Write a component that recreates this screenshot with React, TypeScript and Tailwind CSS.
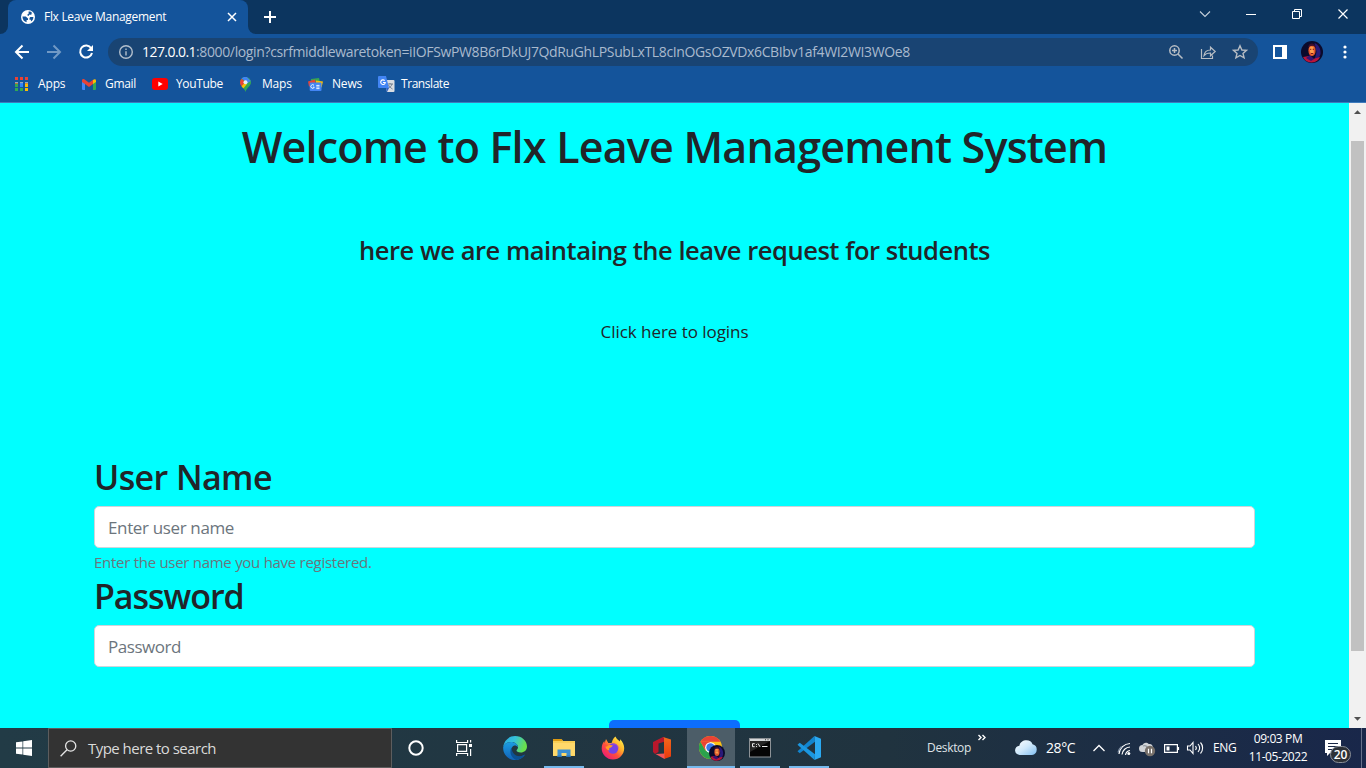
import React from "react";

function Globe() {
  return (
    <svg width="14" height="14" viewBox="0 0 14 14">
      <circle cx="7" cy="7" r="7" fill="#fff" />
      <path d="M1.500 6.600h3.300L7 8.600v1.300H5.600v2.400C3.200 11.700 1.500 9.600 1.500 7zM7.600 1.500h1.600c.900.400 1.600 1 2.200 1.800l-1 .300v1.200H8v1h-.900L6 5l1.600-1.200zM9.300 6.900h3.100c0 2-.900 3.600-2.500 4.600V9.700H8.500V8z" fill="#14549b" />
    </svg>
  );
}

function Face({ size }: { size: number }) {
  return (
    <svg width={size} height={size} viewBox="0 0 22 22" className="shrink-0">
      <circle cx="11" cy="11" r="11" fill="#0b0a2b" />
      <path d="M13.500 2c4.500 2 6.500 6 6 11-1 4-3 5-6 6l2-8z" fill="#2a1a7a" />
      <path d="M2 16l6-1 4 3 7-2c-1 3-4 5.200-8 5.500C6.500 21.800 3.500 19.500 2 16z" fill="#b8153c" />
      <path d="M5 17l4-3 4 4-3 2z" fill="#3a1170" />
      <ellipse cx="11" cy="9.500" rx="3.600" ry="5.600" fill="#e2542a" />
      <path d="M8.500 7c1-1.500 3-2 4-.5l.300 5L11 14l-2-3z" fill="#ff9d4a" />
      <path d="M9 8.300h1.300M11.700 8.300H13M10 12.500h2" stroke="#7a1c20" />
      <path d="M7 6.500c.5-3.500 3-4.500 5-3.800C14 3.300 15 5 14.700 7L13 4.800 9 5z" fill="#3b1030" />
    </svg>
  );
}

function TabStrip() {
  return (
    <div className="flex h-[34px] bg-[#0c355f] text-white">
      <div className="flex w-2 items-end bg-[#14549b]"><div className="h-full w-2 rounded-br-lg bg-[#0c355f]" /></div>
      <div className="flex w-60 items-center rounded-t-lg bg-[#14549b] pl-[13px] pr-[11px]">
        <Globe />
        <span className="ml-[9px] flex-1 whitespace-nowrap text-xs tracking-[-0.31px]">Flx Leave Management</span>
        <svg width="10" height="10" viewBox="0 0 10 10" stroke="#fff" strokeWidth="1.500"><path d="M1 1l8 8M9 1l-8 8" /></svg>
      </div>
      <div className="w-2 bg-[#14549b]"><div className="h-full w-2 rounded-bl-lg bg-[#0c355f]" /></div>
      <svg width="12" height="12" viewBox="0 0 12 12" className="ml-2 mt-[11px]" stroke="#fff" strokeWidth="2"><path d="M6 0v12M0 6h12" /></svg>
      <div className="flex-1" />
      <svg width="168" height="34" viewBox="1198 0 168 34" fill="none" stroke="#fff">
        <path d="M1200 11.500l5 5 5-5" stroke="#c5d0dc" strokeWidth="1.100" />
        <path d="M1246 14.500h10" />
        <path d="M1292.500 11.500h7v7h-7zM1294.500 11v-1.500h7v7h-2" />
        <path d="M1338.500 9.500l9 9M1347.500 9.500l-9 9" strokeWidth="1.200" />
      </svg>
    </div>
  );
}

function Toolbar() {
  return (
    <div className="flex h-9 items-center bg-[#14549b]">
      <svg width="108" height="36" viewBox="0 34 108 36" fill="none" strokeWidth="2">
        <path d="M29 52H16M22.500 45.500L16 52l6.500 6.500" stroke="#fff" />
        <path d="M47 52h13M53.500 45.500L60 52l-6.500 6.500" stroke="#7199c5" />
        <path d="M91.200 48.200A6 6 0 1 0 92 53" stroke="#fff" />
        <path d="M93 45v6h-6z" fill="#fff" />
      </svg>
      <div className="flex h-7 w-[1150px] items-center rounded-full bg-[#194473] pl-[11px]">
        <svg width="14" height="14" viewBox="0 0 14 14" fill="none" stroke="#b3bfcc" strokeWidth="1.400">
          <circle cx="7" cy="7" r="6.300" /><path d="M7 6.200v4.300M7 3.500v1.500" />
        </svg>
        <span className="ml-[9px] w-[54px] whitespace-nowrap text-sm tracking-[-0.563px] text-white">127.0.0.1</span>
        <span className="flex-1 whitespace-nowrap text-sm tracking-[-0.366px] text-[#a9bace]">:8000/login?csrfmiddlewaretoken=iIOFSwPW8B6rDkUJ7QdRuGhLPSubLxTL8cInOGsOZVDx6CBIbv1af4WI2WI3WOe8</span>
        <svg width="98" height="28" viewBox="1160 38 98 28" fill="none" stroke="#b7bdc4" strokeWidth="1.500">
          <circle cx="1174.500" cy="50.500" r="4.700" /><path d="M1178 54l4.500 4.500M1172 50.500h5M1174.500 48v5" />
          <path d="M1201.500 49v9.500h11v-3M1204 55.500c.500-3.500 3-5.500 6.500-5.500v-2.800l4.700 4.300-4.700 4.300v-2.800c-3 0-5 .700-6.500 2.500z" strokeWidth="1.200" />
          <path d="M1240 45.800l1.900 4.200 4.600.400-3.500 3 1.100 4.500-4.100-2.400-4.100 2.400 1.100-4.500-3.500-3 4.600-.400z" strokeWidth="1.400" />
        </svg>
      </div>
      <svg width="14" height="14" viewBox="0 0 14 14" className="ml-[15px] mr-[14px]"><path d="M0 0h14v14H0zM2 2v10h7V2z" fill="#fff" fillRule="evenodd" /></svg>
      <Face size={22} />
      <svg width="4" height="14" viewBox="0 0 4 14" className="ml-5" fill="#fff"><circle cx="2" cy="2" r="1.600" /><circle cx="2" cy="7" r="1.600" /><circle cx="2" cy="12" r="1.600" /></svg>
    </div>
  );
}

function Bookmarks() {
  return (
    <div className="flex h-[33px] items-start border-b border-[#3f7bbd] bg-[#14549b] pl-[15px] pt-1 text-xs text-white whitespace-nowrap">
      <div className="flex h-5 w-[67px] items-center">
        <svg width="13" height="14" viewBox="0 0 13 14" className="mr-[10px]">
          <path d="M0 0h3v3H0zM5 0h3v3H5zM10 0h3v3h-3z" fill="#ea4335" />
          <path d="M0 5h3v4H0z" fill="#b5743f" /><path d="M5 5h3v4H5z" fill="#4285f4" /><path d="M10 5h3v4h-3z" fill="#d88a2c" />
          <path d="M0 5h3v1H0zM5 5h3v1H5zM10 5h3v1h-3z" fill="#93a8bf" />
          <path d="M0 7h3v3H0zM0 11h3v3H0zM5 11h3v3H5z" fill="#34a853" /><path d="M5 7h3v3H5z" fill="#2f86f6" /><path d="M10 7h3v3h-3zM10 11h3v3h-3z" fill="#fbbc05" />
        </svg>
        <span className="tracking-[-0.15px]">Apps</span>
      </div>
      <div className="flex h-5 w-[71px] items-center">
        <svg width="14" height="11" viewBox="0 0 14 11" className="mr-[9px]">
          <path d="M0 2v8a1 1 0 0 0 1 1h2V4z" fill="#4285f4" /><path d="M14 2v8a1 1 0 0 1-1 1h-2V4z" fill="#34a853" />
          <path d="M11 1v4l3-2V1.500C14 0 12 0 11 1z" fill="#fbbc04" /><path d="M0 3V1.500C0 0 2-.300 3 .700l4 3 4-3V5L7 8 3 5 0 3z" fill="#ea4335" />
        </svg>
        <span className="tracking-[-0.313px]">Gmail</span>
      </div>
      <div className="flex h-5 w-[86px] items-center -ml-px">
        <svg width="16" height="12" viewBox="0 0 16 12" className="mr-2"><rect width="16" height="12" rx="3" fill="#f00" /><path d="M6.300 3.500v5L10.700 6z" fill="#fff" /></svg>
        <span className="tracking-[-0.335px]">YouTube</span>
      </div>
      <div className="flex h-5 w-[70px] items-center pl-[2px]">
        <svg width="11" height="15" viewBox="0 0 11 15" className="mr-[11px]">
          <path d="M5.500 0A5.300 5.300 0 0 1 11 5.300c0 4-4.500 5.500-5.500 9.700C4.500 10.800 0 9.300 0 5.300A5.300 5.300 0 0 1 5.500 0z" fill="#34a853" />
          <path d="M0 5.300A5.300 5.300 0 0 1 1.500 1.700L5.500 5 1.500 9.300C.600 8 0 7 0 5.300z" fill="#ea4335" />
          <path d="M1.500 9.300L4 6.500 7 7 3.300 11.500z" fill="#fbbc04" />
          <path d="M1.500 1.700A5.300 5.300 0 0 1 7.100.200L10.800 4 7 6.500 4 3z" fill="#4285f4" />
          <circle cx="5.500" cy="5.300" r="2" fill="#e8eef5" />
        </svg>
        <span className="tracking-[-0.2px]">Maps</span>
      </div>
      <div className="flex h-5 w-[70px] items-center">
        <svg width="15" height="13" viewBox="0 0 15 13" className="mr-[9px]">
          <path d="M3 1l8-1 1 4H3z" fill="#34a853" /><path d="M0 3.500l7-2 1 5-7 2z" fill="#ea4335" /><path d="M8 2.500l7 1-1.500 6L8 8z" fill="#fbbc04" />
          <rect x="1.700" y="4.500" width="11.800" height="8.500" rx="1" fill="#4285f4" />
          <path d="M6 7.300a1.800 1.800 0 1 0 .300 1.900H5M8.300 7.400h3.200M8.300 9h3.200M8.300 10.600h3.200" fill="none" stroke="#fff" strokeWidth=".9" />
        </svg>
        <span className="tracking-[-0.199px]">News</span>
      </div>
      <div className="flex h-5 items-center">
        <svg width="17" height="16" viewBox="0 0 17 16" className="mr-[6px]">
          <path d="M6 4h9.500a1 1 0 0 1 1 1v10a1 1 0 0 1-1 1H9z" fill="#d9dde2" />
          <path d="M9.500 8h5.500M12 7v1M14 8c-.500 2-2 3.500-3.500 4M10.500 9c1 2 2.500 3 4 4" fill="none" stroke="#6f7c8c" />
          <path d="M1 0h7l3 12H1a1 1 0 0 1-1-1V1a1 1 0 0 1 1-1z" fill="#4285f4" /><path d="M8 12h3l-2 4z" fill="#2f62c4" />
          <path d="M6.700 4.600a2.300 2.300 0 1 0 .600 1.900H5" fill="none" stroke="#fff" strokeWidth="1.100" />
        </svg>
        <span className="tracking-[-0.443px]">Translate</span>
      </div>
    </div>
  );
}

function LoginPage() {
  return (
    <main className="flex-1 overflow-hidden bg-[#00ffff] px-[94px] text-[#212529]">
      <h1 className="mt-[18px] h-[52px] whitespace-nowrap text-center text-[43px] font-semibold leading-[52px] tracking-[-0.78px]">Welcome to Flx Leave Management System</h1>
      <h4 className="mt-[61px] h-8 whitespace-nowrap text-center text-[25.500px] font-semibold leading-8 tracking-[-0.46px]">here we are maintaing the leave request for students</h4>
      <p className="mt-[53px] text-center text-[17px] leading-[26px] tracking-[-0.047px]">Click here to logins</p>
      <h2 className="mt-[111px] text-[34px] font-semibold leading-[42px] tracking-[-0.6px]">User Name</h2>
      <input className="mt-2 block h-[42px] w-full rounded-[5px] border border-[#ced4da] bg-white px-[13px] text-[17px] tracking-[-0.36px] placeholder:text-[#6c757d]" placeholder="Enter user name" />
      <p className="mt-[3px] text-[15px] leading-[22px] tracking-[-0.28px] text-[#6c757d]">Enter the user name you have registered.</p>
      <h2 className="mt-[2px] text-[34px] font-semibold leading-[42px] tracking-[-1.05px]">Password</h2>
      <input className="mt-2 block h-[42px] w-full rounded-[5px] border border-[#ced4da] bg-white px-[13px] text-[17px] tracking-[-0.45px] placeholder:text-[#6c757d]" placeholder="Password" />
      <button className="mx-auto mt-[53px] block h-[42px] w-[131px] rounded-[5px] bg-[#0d6efd]" />
    </main>
  );
}

function Scrollbar() {
  return (
    <div className="flex w-[17px] flex-col items-center bg-[#f1f1f1]">
      <svg width="17" height="38" viewBox="0 0 17 38"><path d="M5 11h7L8.500 7.300z" fill="#505050" /></svg>
      <div className="h-[510px] w-[13px] bg-[#c1c1c1]" />
      <div className="flex-1" />
      <svg width="17" height="17" viewBox="0 0 17 17"><path d="M5 6h7L8.500 9.800z" fill="#505050" /></svg>
    </div>
  );
}

function AppCell({ open, active, children }: { open?: boolean; active?: boolean; children: React.ReactNode }) {
  return (
    <div className="flex w-[49px] justify-center">
      <div className={active ? "flex h-10 w-12 flex-col items-center bg-[#4c5d68]" : "flex h-10 w-10 flex-col items-center"}>
        <div className="flex h-[38px] items-center justify-center pt-[2px]">{children}</div>
        {(open || active) && <div className="h-[2px] w-full bg-[#76b9ed]" />}
      </div>
    </div>
  );
}

function Taskbar() {
  return (
    <footer className="flex h-10 bg-linear-to-r from-[#223b46] via-[#20333f] via-65% to-[#19274a] text-white">
      <div className="flex w-12 items-center justify-center">
        <svg width="16" height="16" viewBox="0 0 16 16" fill="#fff"><path d="M0 2.300L6.500 1.400v6.200H0zM7.200 1.300L16 0v7.600H7.200zM0 8.400h6.500v6.200L0 13.700zM7.200 8.400H16V16l-8.800-1.300z" /></svg>
      </div>
      <div className="flex h-10 w-[344px] items-center border border-[#5d5d5e] bg-[#333333] pl-[11px]">
        <svg width="17" height="17" viewBox="0 0 17 17" fill="none" stroke="#e6e6e6" strokeWidth="1.300"><circle cx="10.700" cy="6" r="5.100" /><path d="M7 9.700L.600 16.300" /></svg>
        <span className="ml-[11px] whitespace-nowrap text-[15px] tracking-[-0.53px] text-[#dadada]">Type here to search</span>
      </div>
      <div className="flex w-12 items-center justify-center">
        <svg width="16" height="16" viewBox="0 0 16 16"><circle cx="8" cy="8" r="6.700" fill="none" stroke="#fff" strokeWidth="2" /></svg>
      </div>
      <div className="flex w-[50px] items-center justify-center">
        <svg width="17" height="16" viewBox="0 0 17 16" fill="none" stroke="#fff" strokeWidth="1.200" className="-ml-[2px]">
          <path d="M.600 0v2.500h11V0M.600 16v-2.500h11V16M1.600 4.600h9v6.800h-9zM14.600 0v2.500M14.600 9v7" /><path d="M13 4h3v3h-3z" fill="#fff" stroke="none" />
        </svg>
      </div>
      <AppCell>
        <svg width="24" height="24" viewBox="0 0 24 24">
          <defs>
            <linearGradient id="eg" x1="0" y1="0" x2="1" y2=".3"><stop stopColor="#2aa8e0" /><stop offset=".5" stopColor="#35c1da" /><stop offset="1" stopColor="#69df4c" /></linearGradient>
            <linearGradient id="eb" x1="0" y1="0" x2="0" y2="1"><stop stopColor="#1b9de2" /><stop offset="1" stopColor="#1262b8" /></linearGradient>
          </defs>
          <path d="M.200 11C1 4.500 6 0 12 0c7 0 12 5 12 10.500 0 3.800-2.800 6-6.300 6-2.700 0-4.200-.900-4.200-1.900 0-.800 1.500-1.300 1.500-3.300C15 8 11.500 6 8 6 4.500 6 1.500 8 .200 11z" fill="url(#eg)" />
          <path d="M.200 11C1.500 8 4.500 6 8 6c3.500 0 7 2.200 7 5.300-1-1.300-2.200-1.800-3.500-1.700C9.500 10 8.300 12 8.300 14.200c0 4 3.800 7.300 8.200 6.600 2.500-.400 3.800-1.500 5.500-2.300C20 22 16.500 24 12 24 5 24-.400 18 .200 11z" fill="url(#eb)" />
          <path d="M8.500 11.500C6 16 8 22 13.300 23.900 18 23.500 20.500 21 22 18.600c-5.500 3.400-13 1.400-13.500-7.100z" fill="#0c5194" />
        </svg>
      </AppCell>
      <AppCell open>
        <svg width="22" height="20" viewBox="0 0 22 20">
          <path d="M0 1.500h9l1 1.500h12v15H0z" fill="#f9cf55" /><path d="M0 1h8.500l1 2H0z" fill="#dd9a12" /><path d="M0 5h22v12.500H0z" fill="#ffd96b" />
          <path d="M4.500 11.500h13V19h-4v-4h-5v4h-4z" fill="#3c8fd0" /><path d="M4.500 17.500h4V19h-4zM13.500 17.500h4V19h-4z" fill="#2873b5" />
        </svg>
      </AppCell>
      <AppCell>
        <svg width="24" height="24" viewBox="0 0 24 24" className="-mt-px">
          <defs><linearGradient id="ff" x1=".9" y1=".1" x2=".2" y2=".9"><stop stopColor="#fff04a" /><stop offset=".35" stopColor="#ffb02a" /><stop offset=".65" stopColor="#ff4f3b" /><stop offset="1" stopColor="#ee1f72" /></linearGradient></defs>
          <path d="M14.500.500c1 3 3 3.500 4.500 5l.200-2.300c2.500 2.500 4 5.800 4 9C23.200 18.500 18.200 23.500 12 23.500S.700 18.500.700 12.500c0-3 1-5.800 2.700-7.500l.200 2.200L5 3l2.300 4 3.200-.100c1-.900.500-3.900 4-6.400z" fill="url(#ff)" />
          <circle cx="12" cy="12.500" r="5.200" fill="#7542e5" /><path d="M6 10.500c2-2 4-1.500 6-1l-2 2c-1.500 0-2.500 1-1.500 3-2.500-.500-4-2-4-4z" fill="#ff9a22" />
          <path d="M12 8c4 0 5 2 5 4" stroke="#b347c5" fill="none" />
        </svg>
      </AppCell>
      <AppCell>
        <svg width="18" height="22" viewBox="0 0 18 22">
          <defs><linearGradient id="of" x1="0" y1="0" x2="0" y2="1"><stop stopColor="#f06a1c" /><stop offset="1" stopColor="#e8390c" /></linearGradient></defs>
          <path d="M0 5l10-5 2 1v3.500L5.500 6.500v8.500L2 17l-2-2z" fill="#b8172b" /><path d="M10 0l8 2.500v17L11 22V1z" fill="url(#of)" /><path d="M2.500 17l9-.500V22z" fill="#f2555a" />
        </svg>
      </AppCell>
      <AppCell active>
        <div className="relative h-6 w-6">
          <svg width="23" height="23" viewBox="0 0 24 24">
            <circle cx="12" cy="12" r="12" fill="#fbc116" />
            <path d="M1.600 6A12 12 0 0 1 22.400 6H12z" fill="#ea4335" />
            <path d="M1.600 6A12 12 0 0 0 12 24l5.200-9H6.800z" fill="#2ba24c" /><path d="M1.600 6L6.800 15 12 6z" fill="#ea4335" />
            <circle cx="12" cy="12" r="5.600" fill="#fff" /><circle cx="12" cy="12" r="4.400" fill="#3b78e7" />
          </svg>
          <div className="absolute left-[10px] top-[9px]"><Face size={16} /></div>
        </div>
      </AppCell>
      <AppCell open>
        <svg width="22" height="20" viewBox="0 0 22 20">
          <rect x=".5" y=".5" width="21" height="18.500" fill="#050505" stroke="#8d9296" /><path d="M1 1h20v2H1z" fill="#d5d8da" /><path d="M16 1.300h1v1h-1zM18.500 1.300h1v1h-1z" fill="#333" />
          <path d="M1 3h20L1 14z" fill="#252525" />
          <path d="M5.700 5.700H3.500v3h2.200M7.500 6v.900M7.500 8v.900M9 5.500l2.200 3.500M13 8.500h5.500" fill="none" stroke="#e8e8e8" />
        </svg>
      </AppCell>
      <AppCell open>
        <svg width="24" height="24" viewBox="0 0 24 24">
          <path d="M17.500 0L.500 15.200 2.700 17.200 18 5.700z" fill="#1285cf" /><path d="M17.500 24L.500 8.800 2.700 6.800 18 18.300z" fill="#1b97e0" />
          <path d="M18 5.700v12.600L17.500 24 24 21.300V2.700L17.500 0z" fill="#2aa9f2" />
        </svg>
      </AppCell>
      <div className="flex-1" />
      <span className="mr-[7px] flex w-11 items-center whitespace-nowrap text-xs tracking-[-0.33px] text-[#dfe3e6]">Desktop</span>
      <svg width="8" height="40" viewBox="0 0 8 40" className="mr-[29px]" fill="none" stroke="#fff" strokeWidth="1.400"><path d="M.500 7l2.500 2.500L.500 12M4.500 7L7 9.500 4.500 12" /></svg>
      <svg width="22" height="40" viewBox="0 0 22 40" className="mr-[9px]">
        <defs><linearGradient id="cl" x1="0" y1="0" x2="1" y2="1"><stop stopColor="#fff" /><stop offset=".5" stopColor="#cfe8fb" /><stop offset="1" stopColor="#7fbdf0" /></linearGradient></defs>
        <path d="M5 27a4.600 4.600 0 0 1-.600-9.200C5 14 8 12.200 11.500 12.200c3 0 5.300 1.500 6 4A5.500 5.500 0 0 1 17 27z" fill="url(#cl)" />
      </svg>
      <span className="flex w-[30px] items-center whitespace-nowrap text-sm tracking-[-0.4px]">28°C</span>
      <svg width="137" height="40" viewBox="1076 728 137 40" fill="none" stroke="#fff" strokeWidth="1.200">
        <path d="M1093.500 751l5.500-5.500 5.500 5.500" strokeWidth="1.300" />
        <path d="M1119 754a11.500 11.500 0 0 1 11-10.500M1122 754.500a8.500 8.500 0 0 1 8-7.500M1125.500 755a5.500 5.500 0 0 1 4.500-4.500" /><path d="M1118 752.500a12 12 0 0 1 3.500-6" stroke="#8090a4" /><circle cx="1128.800" cy="753.500" r="1.500" fill="#fff" stroke="none" />
        <path d="M1142.500 752a3.500 3.500 0 0 1 0-7c.600-2 4-3.400 6.300-1 2.500-.500 4 1 4 3 0 3-1 5-3 5z" fill="#d0d3d7" stroke="none" /><path d="M1143 746c2-1 4 0 5 2l4-1" stroke="#8f969d" />
        <circle cx="1150" cy="751" r="5.200" fill="#77706a" stroke="none" /><path d="M1148.500 748.700v4.600M1151.500 748.700v4.600" />
        <path d="M1164.600 744.600h12.800v7.800h-12.800zM1178.500 747v3" /><path d="M1166.500 746.500h3v4h-3z" fill="#fff" stroke="none" />
        <path d="M1187.500 746h2.500l3-3.500v11l-3-3.500h-2.500zM1195.500 746c1 1.200 1 2.800 0 4M1198 744c2 2.400 2 5.600 0 8M1200.500 742.500c2.800 3 2.800 8 0 11" strokeWidth="1.100" />
      </svg>
      <span className="flex w-6 items-center whitespace-nowrap text-xs tracking-[-0.35px]">ENG</span>
      <div className="ml-[11px] flex w-[60px] flex-col items-center whitespace-nowrap pt-[2px] text-xs leading-[18px]">
        <span className="tracking-[-0.38px]">09:03 PM</span><span className="tracking-[-0.42px]">11-05-2022</span>
      </div>
      <div className="relative ml-[17px] h-10 w-[36px]">
        <svg width="16" height="40" viewBox="0 0 16 40"><path d="M0 12h16v13H5l-3 3v-3H0z" fill="#fff" /><path d="M3 15.500h10M3 18.500h10M3 21.500h6" stroke="#1a2846" /></svg>
        <div className="absolute left-[5px] top-[18px] flex h-[17px] w-[21px] items-center justify-center rounded-full border border-[#8b9099] bg-[#2c3036] text-xs font-semibold leading-none">20</div>
      </div>
      <div className="mr-1 w-px bg-[#66708a]" />
    </footer>
  );
}

export default function App() {
  return (
    <div className="flex h-[768px] w-[1366px] flex-col overflow-hidden font-['Open_Sans','Noto_Sans',sans-serif]">
      <TabStrip />
      <Toolbar />
      <Bookmarks />
      <div className="flex min-h-0 flex-1">
        <LoginPage />
        <Scrollbar />
      </div>
      <Taskbar />
    </div>
  );
}
